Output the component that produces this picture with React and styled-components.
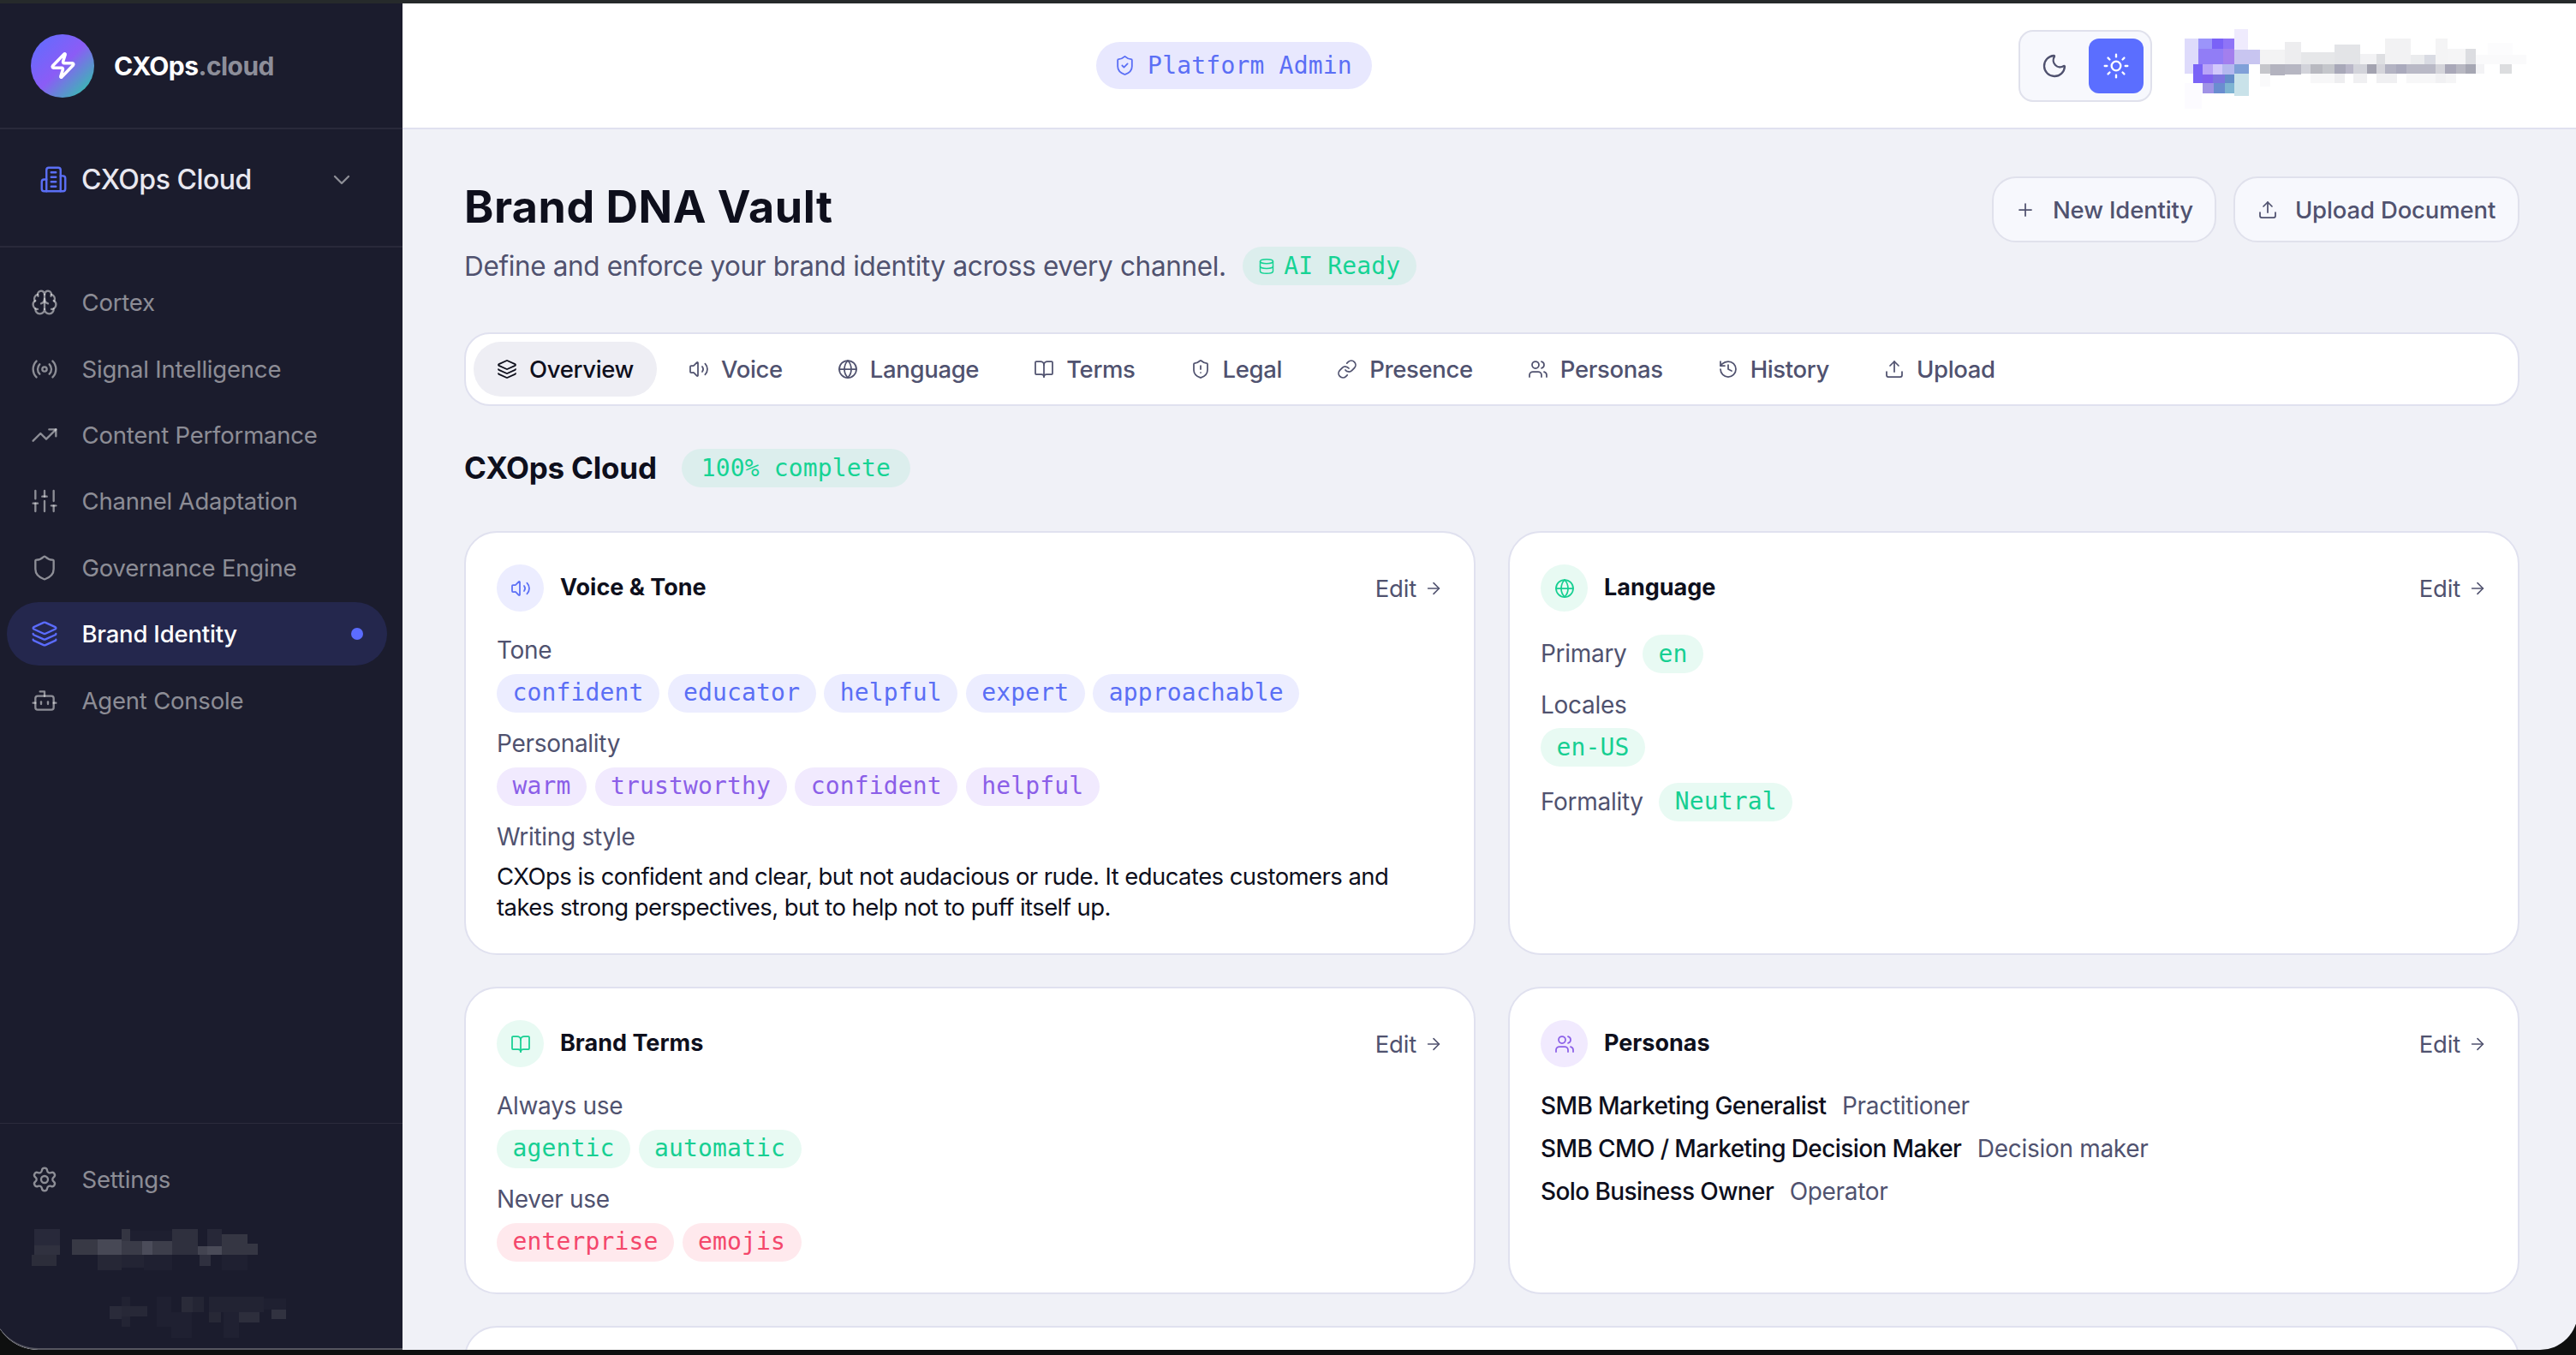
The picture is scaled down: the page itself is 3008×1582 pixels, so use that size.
// react imports
import React from 'react';
// styled components imports
import styled, { createGlobalStyle } from 'styled-components';
// icon imports
import {
  ArrowRight, BookOpen, Bot, Brain, ChevronDown, Database, Globe, History, Layers, Link,
  Moon, Plus, Radio, Settings, Shield, ShieldAlert, ShieldCheck, Sun, TrendingUp, Upload,
  Users, Volume2, Zap,
} from 'lucide-react';

const GlobalStyle = createGlobalStyle`
  * {
    box-sizing: border-box;
  }

  body {
    margin: 0;
    background-color: #0e0f0f;
    font-family: Inter, "Liberation Sans", sans-serif;
    font-size: 27.5px;
    color: #0e0f1c;
  }

  svg {
    display: block;
    flex-shrink: 0;
  }
`

const mono = '"DejaVu Sans Mono", "Liberation Mono", monospace';

const tones = {
  blue: { color: '#5b6ff5', bg: '#ecedff' },
  purple: { color: '#8b5fe8', bg: '#f1eafe' },
  green: { color: '#16cf92', bg: '#e8faf3' },
  red: { color: '#f4476b', bg: '#ffe9ed' },
  mint: { color: '#16d394', bg: '#dceeed' },
};

// styled components
const Screen = styled.div`
  height: 1582px;
  padding-bottom: 6px;
  border-top: 4px solid #262a2b;
  overflow: hidden;
`

const Window = styled.div`
  height: 1572px;
  margin: 0 -2px 0 -9px;
  display: flex;
  border-radius: 0 0 44px 54px;
  background-color: #f0f1f7;
  overflow: hidden;
`

const Sidebar = styled.aside`
  width: 479px;
  flex-shrink: 0;
  padding-left: 9px;
  display: flex;
  flex-direction: column;
  background-color: #1b1c2d;
  border-bottom: 2px solid #55555f;
  border-bottom-left-radius: 54px;
`

const Brand = styled.div`
  height: 147px;
  padding-left: 36px;
  display: flex;
  align-items: center;
  gap: 23px;
  border-bottom: 2px solid #29293a;
`

const Logo = styled.div`
  width: 74px;
  height: 74px;
  border-radius: 50%;
  display: flex;
  justify-content: center;
  align-items: center;
  background: linear-gradient(135deg, #5b6fff 0%, #8b5cf6 50%, #22d3a0 100%);
  color: #ffffff;
`

const BrandName = styled.span`
  font-size: 30px;
  font-weight: 700;
  letter-spacing: -0.55px;
  color: #ffffff;

  span {
    color: #8d8e99;
  }
`

const OrgPicker = styled.div`
  height: 138px;
  padding: 0 55px 19px 46px;
  display: flex;
  align-items: center;
  border-bottom: 2px solid #29293a;
  color: #5b6ff5;

  svg:last-child {
    color: rgba(255, 255, 255, 0.5);
  }
`

const OrgName = styled.span`
  flex: 1;
  margin-left: 16px;
  font-size: 32px;
  font-weight: 500;
  letter-spacing: -0.5px;
  color: #e8e8f0;
`

const Nav = styled.nav`
  flex: 1;
  padding: 27.5px 18px 0 8px;
  display: flex;
  flex-direction: column;
  gap: 4px;
`

const NavItem = styled.a`
  height: 73.4px;
  flex-shrink: 0;
  padding: 0 28px;
  display: flex;
  align-items: center;
  gap: 27.5px;
  border-radius: 37px;
  letter-spacing: -0.2px;
  font-weight: ${props => props.$active ? 500 : 400};
  color: ${props => props.$active ? '#ffffff' : 'rgba(255, 255, 255, 0.5)'};
  background-color: ${props => props.$active ? '#24274d' : 'transparent'};

  svg {
    color: ${props => props.$active ? '#5b6cff' : 'inherit'};
  }
`

const ActiveDot = styled.i`
  width: 14px;
  height: 14px;
  margin-left: auto;
  border-radius: 50%;
  background-color: #5b6cff;
`

const SidebarFooter = styled.div`
  height: 263px;
  padding: 28px 18px 0 8px;
  border-top: 1px solid #2b2b3c;

  > svg {
    margin: 19px 0 0 28px;
  }
`

const Page = styled.div`
  flex: 1;
  display: flex;
  flex-direction: column;
  overflow: hidden;
`

const TopBar = styled.header`
  height: 147px;
  flex-shrink: 0;
  padding: 0 54px 0 810px;
  display: flex;
  align-items: center;
  background-color: #ffffff;
  border-bottom: 2px solid #e0e1ef;

  > svg {
    margin-top: 7px;
  }
`

const RoleBadge = styled.div`
  height: 55px;
  width: 322px;
  padding-right: 2px;
  display: flex;
  align-items: center;
  justify-content: center;
  gap: 14px;
  border-radius: 28px;
  background-color: #e8e8fe;
  color: #5b6ff5;
  font-family: ${mono};
  font-size: 28px;
  letter-spacing: 0.2px;
`

const ThemeToggle = styled.div`
  height: 84px;
  margin-left: auto;
  margin-right: 31px;
  padding: 0 8px;
  display: flex;
  align-items: center;
  gap: 8px;
  border: 2px solid #e0e1ec;
  border-radius: 17px;
  background-color: #f7f8fd;
`

const ThemeButton = styled.button`
  width: 64px;
  height: 64px;
  padding: 0;
  display: flex;
  justify-content: center;
  align-items: center;
  border: none;
  border-radius: 12px;
  background-color: ${props => props.$on ? '#5b6eff' : 'transparent'};
  color: ${props => props.$on ? '#ffffff' : '#50526f'};
`

const Main = styled.main`
  padding: 55px 68px 0 72px;
`

const TitleRow = styled.div`
  display: flex;
  justify-content: space-between;
  align-items: flex-start;
`

const Title = styled.h1`
  margin: 0 0 11px;
  font-size: 52px;
  line-height: 71px;
  font-weight: 700;
  letter-spacing: 0.5px;
`

const Subtitle = styled.div`
  display: flex;
  align-items: center;
  gap: 19px;
  font-size: 31.5px;
  line-height: 45px;
  letter-spacing: -0.35px;
  color: #50526f;
`

const Actions = styled.div`
  display: flex;
  gap: 20px;
`

const ActionButton = styled.button`
  width: ${props => props.$width}px;
  height: 77px;
  padding: 0;
  display: flex;
  justify-content: center;
  align-items: center;
  gap: 20px;
  border: 2px solid #e0e1ec;
  border-radius: 28px;
  background-color: #f7f8fd;
  color: #50526f;
  font-family: inherit;
  font-size: 27.5px;
  font-weight: 500;
  letter-spacing: -0.15px;
`

const Tabs = styled.div`
  height: 86px;
  margin: 55px 0 50px;
  padding: 0 9px;
  display: flex;
  align-items: center;
  gap: 10px;
  border: 2px solid #e0e1ef;
  border-radius: 30px;
  background-color: #ffffff;
`

const Tab = styled.button`
  height: 64px;
  padding: 0 27px;
  display: flex;
  align-items: center;
  gap: 14px;
  border: none;
  border-radius: 32px;
  background-color: ${props => props.$active ? '#eeeef4' : 'transparent'};
  color: ${props => props.$active ? '#0e0f1c' : '#50526f'};
  font-family: inherit;
  font-size: 27.5px;
  font-weight: 500;
  letter-spacing: -0.35px;
`

const SectionHead = styled.div`
  height: 45px;
  margin-bottom: 51px;
  display: flex;
  align-items: center;
  gap: 29px;
`

const SectionTitle = styled.h2`
  margin: 0;
  font-size: 35px;
  line-height: 43px;
  font-weight: 700;
  letter-spacing: -0.2px;
`

const Chip = styled.span`
  height: 45px;
  padding: 0 ${props => props.$pad || 18.5}px;
  display: inline-flex;
  align-items: center;
  gap: 10px;
  border-radius: 23px;
  background-color: ${props => tones[props.$tone].bg};
  color: ${props => tones[props.$tone].color};
  font-family: ${mono};
  font-size: 28px;
  line-height: 46px;
  letter-spacing: 0.15px;
  white-space: pre;
`

const Grid = styled.div`
  display: grid;
  grid-template-columns: 1fr 1fr;
  gap: 37px 38px;
`

const CardBox = styled.section`
  min-height: 120px;
  grid-column: ${props => props.$wide ? 'span 2' : 'auto'};
  padding: 37px 36px 36px;
  border: 2px solid #e0e1ef;
  border-radius: 38px;
  background-color: #ffffff;
`

const CardHead = styled.div`
  height: 55px;
  margin-bottom: 27px;
  display: flex;
  align-items: center;
`

const CardIcon = styled.div`
  width: 55px;
  height: 55px;
  display: flex;
  justify-content: center;
  align-items: center;
  border-radius: 50%;
  background-color: ${props => tones[props.$tone].bg};
  color: ${props => tones[props.$tone].color};
`

const CardTitle = styled.h3`
  flex: 1;
  margin: 0 0 3px 19px;
  font-size: 27px;
  font-weight: 700;
  letter-spacing: 0;
`

const EditLink = styled.a`
  display: flex;
  align-items: center;
  gap: 9px;
  color: #50526f;
  letter-spacing: -0.2px;
`

const Label = styled.div`
  font-size: 28px;
  line-height: 36.5px;
  letter-spacing: -0.3px;
  color: #50526f;
`

const ChipRow = styled.div`
  margin: 9px 0 18.5px;
  display: flex;
  gap: 9.5px;

  &:last-child {
    margin-bottom: 0;
  }
`

const InlineRow = styled.div`
  margin-bottom: 18.5px;
  display: flex;
  align-items: center;
  gap: 18.5px;
`

const BodyText = styled.p`
  max-width: 1070px;
  margin: 9px 0 0;
  line-height: 36.4px;
  letter-spacing: -0.57px;
`

const PersonaRow = styled.div`
  margin-bottom: 13.5px;
  display: flex;
  gap: 18.5px;
  font-size: 28px;
  line-height: 36.5px;
  letter-spacing: -0.3px;
  color: #50526f;

  strong {
    font-weight: 500;
    letter-spacing: -0.6px;
    color: #0e0f1c;
  }
`

// custom icons
const Building = () => (
  <svg width="33" height="33" viewBox="0 0 24 24" fill="none" stroke="currentColor" strokeWidth="1.75" strokeLinecap="round" strokeLinejoin="round">
    <path d="M6 22V4a2 2 0 0 1 2-2h8a2 2 0 0 1 2 2v18Z" />
    <path d="M6 12H4a2 2 0 0 0-2 2v6a2 2 0 0 0 2 2h2" />
    <path d="M18 9h2a2 2 0 0 1 2 2v9a2 2 0 0 1-2 2h-2" />
    <path d="M10 6h4M10 10h4M10 14h4M10 18h4" />
  </svg>
);

const Sliders = ({ size, strokeWidth }) => (
  <svg width={size} height={size} viewBox="0 0 24 24" fill="none" stroke="currentColor" strokeWidth={strokeWidth} strokeLinecap="round">
    <path d="M4 21v-7M4 10V3" />
    <path d="M12 21v-9M12 8V3" />
    <path d="M20 21v-5M20 12V3" />
    <path d="M2 14h4" />
    <path d="M10 8h4" />
    <path d="M18 16h4" />
  </svg>
);

// pixelated blocks: [x, y, width, height, color]
const userBlocks = [
  [556, 135, 35, 123, '#dedbfb'], [591, 135, 36, 36, '#9b94fa'], [627, 135, 29, 36, '#7a62f7'],
  [656, 135, 28, 36, '#8f74f7'], [684, 102, 36, 72, '#efebfd'], [591, 171, 65, 54, '#917df6'],
  [656, 171, 28, 54, '#a37fee'], [684, 174, 67, 51, '#c8c5f0'], [578, 225, 24, 66, '#7a63f7'],
  [602, 225, 27, 36, '#b9a4f8'], [629, 225, 24, 36, '#d2c8fb'], [653, 225, 31, 36, '#b4b8ef'],
  [684, 225, 37, 36, '#80a0d8'], [602, 261, 27, 30, '#8060f0'], [629, 261, 31, 30, '#7d74e0'],
  [660, 261, 24, 30, '#648cca'], [602, 291, 28, 36, '#a093e6'], [630, 291, 30, 36, '#6a8dd0'],
  [660, 291, 24, 36, '#7eb4d2'], [684, 258, 38, 78, '#c9e2e9'], [556, 291, 44, 90, '#fcfbff'],
  [751, 174, 64, 51, '#f3f3f4'], [815, 147, 42, 78, '#ededef'], [857, 183, 86, 42, '#e6e7e9'],
  [943, 156, 67, 69, '#e3e4e7'], [1010, 189, 42, 36, '#f2f2f4'], [1052, 189, 22, 36, '#dedfe2'],
  [1074, 135, 66, 90, '#f2f2f3'], [1140, 192, 36, 33, '#ebecee'], [1176, 192, 27, 33, '#d9dbe3'],
  [1203, 135, 33, 90, '#f4f4f5'], [1236, 171, 46, 54, '#f5f5f6'], [1282, 171, 27, 54, '#dcdde1'],
  [1309, 192, 130, 33, '#fafafb'], [1338, 150, 66, 42, '#fcfcfd'],
  [751, 225, 26, 33, '#c5c6cb'], [777, 225, 38, 38, '#b3b3bf'], [815, 225, 42, 36, '#b6b6c2'],
  [857, 225, 24, 33, '#d2d3da'], [881, 225, 31, 33, '#b8b9c0'], [912, 225, 31, 33, '#c4c6cb'],
  [943, 225, 28, 33, '#a8a8b8'], [971, 225, 21, 33, '#b9b7c8'], [992, 225, 36, 33, '#d2d3da'],
  [1028, 225, 24, 33, '#a3a3b0'], [1052, 225, 22, 33, '#d4d4da'], [1074, 225, 28, 33, '#b3b3c2'],
  [1102, 225, 27, 33, '#aaaabc'], [1129, 225, 74, 33, '#b9b9c6'], [1203, 225, 26, 33, '#d4d4da'],
  [1229, 225, 29, 33, '#a9a8b8'], [1258, 225, 24, 33, '#b8b8c2'], [1282, 225, 27, 33, '#a6a7b3'],
  [1309, 225, 22, 33, '#f3f3f5'], [1371, 225, 29, 33, '#dcdddf'],
  [751, 258, 26, 45, '#fafafb'], [881, 258, 62, 33, '#f7f7f8'], [943, 258, 27, 33, '#eeeef0'],
  [992, 258, 36, 33, '#f0f0f2'], [1052, 258, 53, 33, '#f0f0f2'], [1129, 258, 74, 33, '#f7f7f8'],
  [1203, 258, 27, 33, '#f1f1f3'], [1230, 258, 28, 33, '#f5f5f6'],
];

const footerBlocks = [
  [120, 465, 90, 57, '#28293a'], [120, 522, 90, 33, '#30313f'], [111, 555, 87, 38, '#2c2d3a'],
  [456, 472, 147, 35, '#1e1f30'], [252, 501, 90, 54, '#383945'], [342, 501, 84, 54, '#474855'],
  [426, 465, 30, 42, '#343542'], [426, 507, 72, 48, '#3a3b48'], [498, 507, 36, 48, '#4b4c5a'],
  [534, 507, 69, 48, '#3d3e4b'], [603, 465, 90, 90, '#2f303e'], [693, 525, 33, 30, '#434451'],
  [726, 465, 51, 60, '#272838'], [726, 525, 51, 30, '#4a4b58'], [777, 483, 90, 72, '#353643'],
  [867, 516, 36, 39, '#353643'], [342, 555, 84, 55, '#262736'], [426, 555, 78, 45, '#232434'],
  [504, 555, 99, 55, '#1f2031'], [698, 555, 40, 38, '#2f303f'], [777, 555, 90, 55, '#1f2031'],
  [384, 735, 42, 45, '#2a2b3a'], [426, 702, 30, 33, '#212232'], [426, 735, 90, 37, '#272837'],
  [426, 772, 30, 35, '#232434'], [550, 702, 50, 105, '#1f2031'], [600, 755, 72, 90, '#1f2031'],
  [636, 702, 40, 53, '#2a2b39'], [676, 702, 38, 53, '#242534'], [732, 702, 192, 53, '#222333'],
  [732, 755, 42, 38, '#272836'], [784, 755, 52, 90, '#202132'], [836, 755, 72, 36, '#2d2e3c'],
  [924, 708, 78, 39, '#1f2031'], [951, 747, 51, 33, '#313240'],
];

const Mosaic = ({ blocks, width, height, viewBox }) => (
  <svg width={width} height={height} viewBox={viewBox} preserveAspectRatio="none" shapeRendering="crispEdges">
    {blocks.map(([x, y, w, h, fill]) => (
      <rect key={`${x}-${y}`} x={x} y={y} width={w} height={h} fill={fill} />
    ))}
  </svg>
);

const navItems = [
  { name: 'Cortex', icon: Brain },
  { name: 'Signal Intelligence', icon: Radio },
  { name: 'Content Performance', icon: TrendingUp },
  { name: 'Channel Adaptation', icon: Sliders },
  { name: 'Governance Engine', icon: Shield },
  { name: 'Brand Identity', icon: Layers, active: true },
  { name: 'Agent Console', icon: Bot },
];

const tabs = [
  { name: 'Overview', icon: Layers, active: true },
  { name: 'Voice', icon: Volume2 },
  { name: 'Language', icon: Globe },
  { name: 'Terms', icon: BookOpen },
  { name: 'Legal', icon: ShieldAlert },
  { name: 'Presence', icon: Link },
  { name: 'Personas', icon: Users },
  { name: 'History', icon: History },
  { name: 'Upload', icon: Upload },
];

const personas = [
  { name: 'SMB Marketing Generalist', role: 'Practitioner' },
  { name: 'SMB CMO / Marketing Decision Maker', role: 'Decision maker' },
  { name: 'Solo Business Owner', role: 'Operator' },
];

const Chips = ({ tone, items }) => (
  <ChipRow>
    {items.map(item => <Chip key={item} $tone={tone}>{item}</Chip>)}
  </ChipRow>
);

const Card = ({ title, icon: Icon, tone, children }) => (
  <CardBox>
    <CardHead>
      <CardIcon $tone={tone}><Icon size={24} strokeWidth={1.75} /></CardIcon>
      <CardTitle>{title}</CardTitle>
      <EditLink>Edit <ArrowRight size={22} strokeWidth={1.75} /></EditLink>
    </CardHead>
    {children}
  </CardBox>
);

const App = () => {
  return (
    <Screen>
      <GlobalStyle />
      <Window>
        <Sidebar>
          <Brand>
            <Logo><Zap size={33} strokeWidth={2.5} /></Logo>
            <BrandName>CXOps<span>.cloud</span></BrandName>
          </Brand>
          <OrgPicker>
            <Building />
            <OrgName>CXOps Cloud</OrgName>
            <ChevronDown size={32} strokeWidth={1.75} />
          </OrgPicker>
          <Nav>
            {navItems.map(({ name, icon: Icon, active }) => (
              <NavItem key={name} $active={active}>
                <Icon size={32} strokeWidth={1.75} />
                {name}
                {active && <ActiveDot />}
              </NavItem>
            ))}
          </Nav>
          <SidebarFooter>
            <NavItem><Settings size={32} strokeWidth={1.75} />Settings</NavItem>
            <Mosaic blocks={footerBlocks} width={300} height={132} viewBox="108 456 900 396" />
          </SidebarFooter>
        </Sidebar>
        <Page>
          <TopBar>
            <RoleBadge><ShieldCheck size={25} strokeWidth={1.75} />Platform Admin</RoleBadge>
            <ThemeToggle>
              <ThemeButton><Moon size={32} strokeWidth={1.75} /></ThemeButton>
              <ThemeButton $on><Sun size={32} strokeWidth={1.75} /></ThemeButton>
            </ThemeToggle>
            <Mosaic blocks={userBlocks} width={412} height={100} viewBox="540 90 912 300" />
          </TopBar>
          <Main>
            <TitleRow>
              <div>
                <Title>Brand DNA Vault</Title>
                <Subtitle>
                  Define and enforce your brand identity across every channel.
                  <Chip $tone="mint"><Database size={20} strokeWidth={1.75} />AI Ready</Chip>
                </Subtitle>
              </div>
              <Actions>
                <ActionButton $width={262}><Plus size={24} strokeWidth={1.75} />New Identity</ActionButton>
                <ActionButton $width={334}><Upload size={24} strokeWidth={1.75} />Upload Document</ActionButton>
              </Actions>
            </TitleRow>
            <Tabs>
              {tabs.map(({ name, icon: Icon, active }) => (
                <Tab key={name} $active={active}><Icon size={24} strokeWidth={1.75} />{name}</Tab>
              ))}
            </Tabs>
            <SectionHead>
              <SectionTitle>CXOps Cloud</SectionTitle>
              <Chip $tone="mint" $pad={23}>100% complete</Chip>
            </SectionHead>
            <Grid>
              <Card title="Voice & Tone" icon={Volume2} tone="blue">
                <Label>Tone</Label>
                <Chips tone="blue" items={['confident', 'educator', 'helpful', 'expert', 'approachable']} />
                <Label>Personality</Label>
                <Chips tone="purple" items={['warm', 'trustworthy', 'confident', 'helpful']} />
                <Label>Writing style</Label>
                <BodyText>
                  CXOps is confident and clear, but not audacious or rude. It educates customers and
                  takes strong perspectives, but to help not to puff itself up.
                </BodyText>
              </Card>
              <Card title="Language" icon={Globe} tone="green">
                <InlineRow><Label>Primary</Label><Chip $tone="green">en</Chip></InlineRow>
                <Label>Locales</Label>
                <Chips tone="green" items={['en-US']} />
                <InlineRow><Label>Formality</Label><Chip $tone="green">Neutral</Chip></InlineRow>
              </Card>
              <Card title="Brand Terms" icon={BookOpen} tone="green">
                <Label>Always use</Label>
                <Chips tone="green" items={['agentic', 'automatic']} />
                <Label>Never use</Label>
                <Chips tone="red" items={['enterprise', 'emojis']} />
              </Card>
              <Card title="Personas" icon={Users} tone="purple">
                {personas.map(({ name, role }) => (
                  <PersonaRow key={name}><strong>{name}</strong>{role}</PersonaRow>
                ))}
              </Card>
              <CardBox $wide />
            </Grid>
          </Main>
        </Page>
      </Window>
    </Screen>
  );
};

export default App;
